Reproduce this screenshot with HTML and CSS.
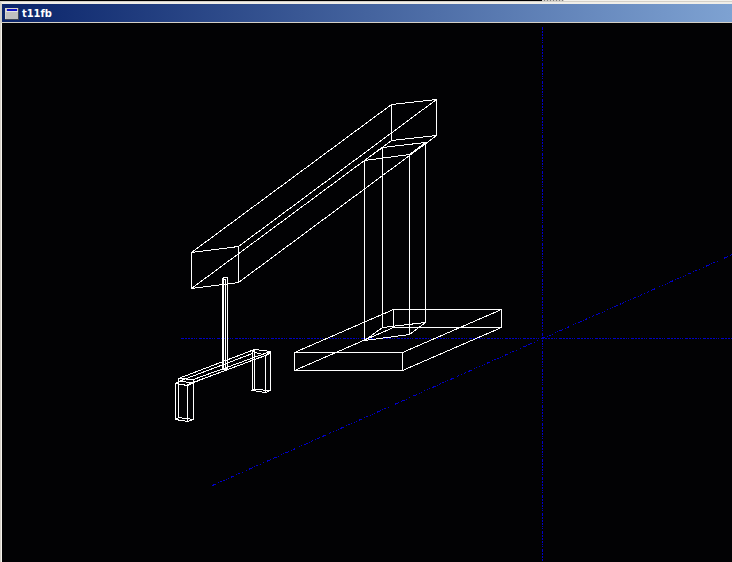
FILE: index.html
```html
<!DOCTYPE html>
<html lang="en">
<head>
<meta charset="utf-8">
<title>t11fb</title>
<link rel="stylesheet" href="styles.css">
</head>
<body>
<div class="backdrop"><span class="backdrop-ticks"></span><span class="backdrop-light"></span></div>
<main class="window">
  <header class="titlebar">
    <svg class="window-icon" viewBox="0 0 14 12" shape-rendering="crispEdges" aria-hidden="true">
      <rect width="14" height="12" fill="#404858"/>
      <rect width="13" height="11" fill="#d8d4cc"/>
      <rect x="1" y="1" width="12" height="10" fill="#c0c0c0"/>
      <rect x="2" y="1" width="10" height="2" fill="#1010c8"/>
      <rect x="1" y="3" width="12" height="1" fill="#e4e4e4"/>
    </svg>
    <h1 class="title">t11fb</h1>
  </header>
  <svg class="viewport" viewBox="2 23 730 539" preserveAspectRatio="xMinYMin slice" shape-rendering="crispEdges" role="img" aria-label="Wireframe model with axes">
    <g class="axes">
      <path d="M181 338.5H732"/>
      <path d="M542.5 27V562"/>
      <path class="depth" d="M212.500 485.500L542.500 338.500L732.500 254.500"/>
    </g>
    <g class="wires" transform="translate(.5 .5)">
      <path d="M191 252L238 246V282L191 288Z M391 104L436 99V135L391 140Z M191 252L391 104 M238 246L436 99 M238 282L436 135 M191 288L391 140"/>
      <path d="M364 160L382 147L425 142L409 154Z M364 340L382 327L425 322L409 334Z M364 160V340 M382 147V327 M425 142V322 M409 154V334"/>
      <path d="M294 352H402V370H294Z M393 309H501V327H393Z M294 352L393 309 M402 352L501 309 M402 370L501 327 M294 370L393 327"/>
      <path d="M222 278L223 277H227V368L225 369H222Z M223 277V368 M225 279V369 M222 279H225"/>
      <path d="M178 378L254 349L270 351L193 379Z M178 381L252 353 M187 384L265 355L270 352 M193 382L270 353 M178 378V382 M175 383L178 381L193 382L187 385Z M175 419L178 417L193 419L187 421Z M175 383V419 M178 378V417 M187 385V421 M193 379V419"/>
      <path d="M252 351L254 349L270 351L265 355Z M252 390L254 389L270 390L265 392Z M252 351V390 M254 349V389 M265 355V392 M270 351V390"/>
    </g>
  </svg>
</main>
</body>
</html>
```
FILE: styles.css
```css
* { box-sizing: border-box; }
html, body { height: 100%; }
body {
  margin: 0;
  display: flex;
  flex-direction: column;
  overflow: hidden;
  background: #020204;
}
.backdrop {
  display: flex;
  flex: none;
  height: 1px;
  padding-left: 542px;
  background: #000;
}
.backdrop-ticks {
  width: 22px;
  background: repeating-linear-gradient(90deg, #d4d0c8 0 2px, #808080 2px 3px);
}
.backdrop-light { flex: 1; background: #f4f2ec; }
.window {
  flex: 1;
  min-height: 0;
  display: flex;
  flex-direction: column;
  border-top: 1px solid #d4d0c8;
  border-left: 1px solid #d4d0c8;
}
.titlebar {
  flex: none;
  display: flex;
  align-items: center;
  gap: 3px;
  height: 21px;
  padding: 1px 3px 0;
  border: solid #d4d0c8;
  border-width: 2px 0 1px 1px;
  border-top-color: #f0eee8;
  background: linear-gradient(90deg, #0a246a, #7ea2d2);
}
.window-icon { width: 14px; height: 12px; }
.title {
  margin: 0;
  color: #fff;
  font: bold 11px/18px "DejaVu Sans Condensed", "DejaVu Sans", sans-serif;
}
.viewport {
  flex: 1;
  min-height: 0;
  width: 100%;
  border-left: 1px solid #f4f2ec;
}
.axes path {
  fill: none;
  stroke: #0000c8;
  stroke-dasharray: 3 1 2 1 2 1 2 1 1 1 1 2;
}
.axes .depth { stroke-dasharray: 4 2 1 1 2 2 1 2 1 1 1 2; }
.wires path { fill: none; stroke: #fff; }
```
